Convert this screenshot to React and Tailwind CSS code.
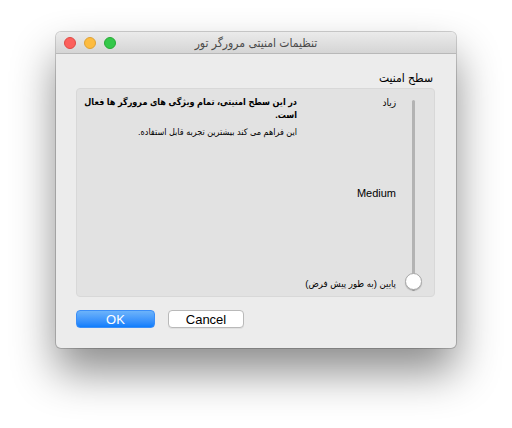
export default function App() {
  const font = { fontFamily: '"Liberation Sans", "DejaVu Sans Condensed", "DejaVu Sans", sans-serif' };
  return (
    <div className="w-[512px] h-[428px] bg-white overflow-hidden pt-[32px] pl-[56px]" style={font}>
      <div className="w-[400px] h-[316px] rounded-[5px] bg-[#ececec] flex flex-col overflow-hidden shadow-[0_24px_44px_rgba(0,0,0,0.45),0_0_0_1px_rgba(0,0,0,0.18)]">
        {/* title bar */}
        <div className="relative h-[22px] shrink-0 bg-gradient-to-b from-[#ebebeb] to-[#d5d5d5] border-b border-[#b8b8b8] flex items-center justify-center">
          <div className="absolute left-[8px] top-[5px] flex gap-[8px]">
            <span className="w-[12px] h-[12px] rounded-full bg-[#fc605c] border border-[#de4a45]" />
            <span className="w-[12px] h-[12px] rounded-full bg-[#fdbc40] border border-[#dea236]" />
            <span className="w-[12px] h-[12px] rounded-full bg-[#34c84a] border border-[#27aa35]" />
          </div>
          <span dir="rtl" className="text-[12px] text-[#4a4a4a] leading-none">تنظیمات امنیتی مرورگر تور</span>
        </div>
        {/* content */}
        <div className="flex-1 flex flex-col px-[20px] pt-[17px]">
          <div className="flex justify-end pr-[3px]">
            <span dir="rtl" className="text-[12px] leading-[14px] text-black">سطح امنیت</span>
          </div>
          <div className="mt-[3px] h-[209px] w-[359px] rounded-[4px] bg-[#e2e2e2] border border-[#d8d8d8] flex">
            <div className="flex-1 flex justify-end pt-[7px]">
              <div dir="rtl" className="w-[220px] text-[9px] text-black">
                <div className="font-bold leading-[13px]">در این سطح امنیتی، تمام ویژگی های مرورگر ها فعال است.</div>
                <div className="mt-[4px] leading-[12px]">این فراهم می کند بیشترین تجربه قابل استفاده.</div>
              </div>
            </div>
            <div className="w-[100px] flex flex-col items-end justify-between pt-[7px] pb-[6px] text-black">
              <span dir="rtl" className="text-[10px] leading-[13px]">زیاد</span>
              <span className="text-[11px] leading-[13px]">Medium</span>
              <span dir="rtl" className="text-[9.5px] leading-[13px]">پایین (به طور پیش فرض)</span>
            </div>
            <div className="w-[38px] relative shrink-0">
              <div className="absolute left-[16px] top-[11px] w-[3px] h-[191px] bg-[#b3b3b3] rounded-full" />
              <div className="absolute left-[9px] top-[184px] w-[17px] h-[17px] rounded-full bg-white border border-[#a8a8a8] shadow-[0_1px_1px_rgba(0,0,0,0.2)]" />
            </div>
          </div>
          <div className="mt-[13px] flex gap-[13px]">
            <button className="w-[79px] h-[18px] rounded-[4px] bg-gradient-to-b from-[#6cb3fa] to-[#0b7dfc] text-white text-[13px] leading-none border border-[#3b8ef7]">OK</button>
            <button className="w-[76px] h-[18px] rounded-[4px] bg-white text-black text-[13px] leading-none border border-[#b9b9b9] shadow-[0_1px_0_rgba(0,0,0,0.05)]">Cancel</button>
          </div>
        </div>
      </div>
    </div>
  );
}
